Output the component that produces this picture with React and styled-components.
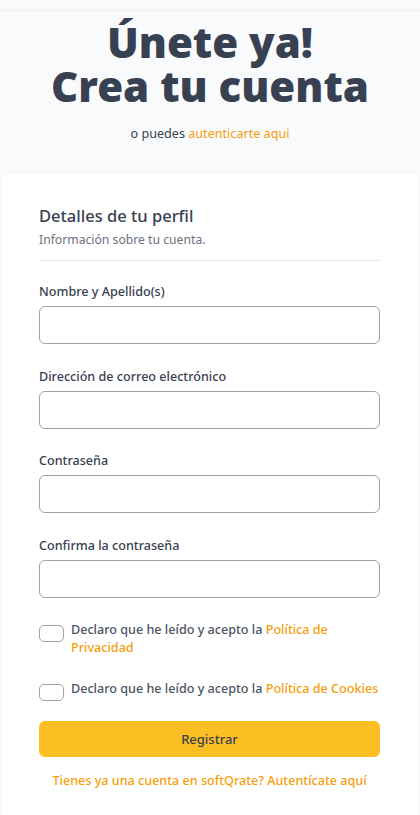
import React from 'react';
import styled, { createGlobalStyle } from 'styled-components';

const GlobalStyle = createGlobalStyle`
  html, body {
    margin: 0;
    padding: 0;
    background: #f9fafb;
    font-family: "Noto Sans", "Open Sans", sans-serif;
    color: #374151;
  }
  * { box-sizing: border-box; }
`;

const TopBar = styled.div`
  height: 11px;
  border-bottom: 1px solid #eef0f3;
`;

const Hero = styled.header`
  text-align: center;
  padding: 9px 0 0;
  height: 162px;
`;

const Title = styled.h1`
  margin: 0;
  font-size: 42px;
  line-height: 44px;
  font-weight: 900;
  color: #374151;
`;

const Lead = styled.p`
  margin: 17px 0 0;
  font-size: 12.6px;
  color: #374151;
`;

const Link = styled.a`
  color: #f59e0b;
  text-decoration: none;
`;

const Card = styled.main`
  margin: 0 2px;
  background: #fff;
  border-radius: 8px 8px 0 0;
  box-shadow: 0 0 3px rgba(0, 0, 0, 0.04);
  padding: 31px 38px 30px 37px;
  min-height: 642px;
`;

const SectionHead = styled.div`
  padding-bottom: 11px;
  border-bottom: 1px solid #e5e7eb;
  margin-bottom: 22px;
`;

const SectionTitle = styled.h2`
  margin: 0;
  font-size: 16.5px;
  line-height: 24px;
  font-weight: 500;
  color: #374151;
`;

const SectionSub = styled.p`
  margin: 3px 0 0;
  font-size: 12.2px;
  line-height: 18px;
  color: #6b7280;
`;

const Field = styled.div`
  display: flex;
  flex-direction: column;
  margin-bottom: 23.5px;
`;

const Label = styled.label`
  font-size: 12.6px;
  line-height: 18px;
  font-weight: 500;
  color: #374151;
  margin-bottom: 5px;
`;

const Input = styled.input`
  height: 38px;
  border: 1px solid #9ca3af;
  border-radius: 6px;
  background: #fff;
  font: inherit;
  padding: 0 10px;
`;

const CheckRow = styled.div`
  display: flex;
  align-items: flex-start;
  gap: 7px;
  margin-top: ${p => p.$top || 0}px;
  margin-bottom: ${p => p.$gap}px;
`;

const BoxShell = styled.span`
  flex: none;
  width: 25px;
  height: 25px;
  margin-top: 4px;
  border-radius: 5px;
  box-shadow: 0 0 2px rgba(0, 0, 0, 0.06);
`;

const Box = styled.span`
  display: block;
  width: 25px;
  height: 17px;
  border: 1px solid #9ca3af;
  border-radius: 5px;
  background: #fff;
`;

const CheckText = styled.span`
  font-size: 12.6px;
  line-height: 18px;
  font-weight: 500;
  color: #4b5563;
`;

const Submit = styled.button`
  display: block;
  width: 100%;
  height: 36px;
  border: none;
  border-radius: 6px;
  background: #fbbf24;
  color: #374151;
  font: inherit;
  font-size: 13px;
  font-weight: 500;
`;

const Foot = styled.p`
  margin: 15px 0 0;
  line-height: 18px;
  text-align: center;
  font-size: 12.6px;
  font-weight: 500;
`;

const fields = [
  { label: 'Nombre y Apellido(s)', type: 'text' },
  { label: 'Dirección de correo electrónico', type: 'email' },
  { label: 'Contraseña', type: 'password' },
  { label: 'Confirma la contraseña', type: 'password' },
];

export default function App() {
  return (
    <>
      <GlobalStyle />
      <TopBar />
      <Hero>
        <Title>
          Únete ya!
          <br />
          Crea tu cuenta
        </Title>
        <Lead>
          o puedes <Link href="#">autenticarte aqui</Link>
        </Lead>
      </Hero>
      <Card>
        <SectionHead>
          <SectionTitle>Detalles de tu perfil</SectionTitle>
          <SectionSub>Información sobre tu cuenta.</SectionSub>
        </SectionHead>
        {fields.map(f => (
          <Field key={f.label}>
            <Label>{f.label}</Label>
            <Input type={f.type} />
          </Field>
        ))}
        <CheckRow $top={1} $gap={23}>
          <BoxShell><Box /></BoxShell>
          <CheckText>
            Declaro que he leído y acepto la <Link href="#">Política de Privacidad</Link>
          </CheckText>
        </CheckRow>
        <CheckRow $gap={12}>
          <BoxShell><Box /></BoxShell>
          <CheckText>
            Declaro que he leído y acepto la <Link href="#">Política de Cookies</Link>
          </CheckText>
        </CheckRow>
        <Submit>Registrar</Submit>
        <Foot>
          <Link href="#">Tienes ya una cuenta en softQrate? Autentícate aquí</Link>
        </Foot>
      </Card>
    </>
  );
}
